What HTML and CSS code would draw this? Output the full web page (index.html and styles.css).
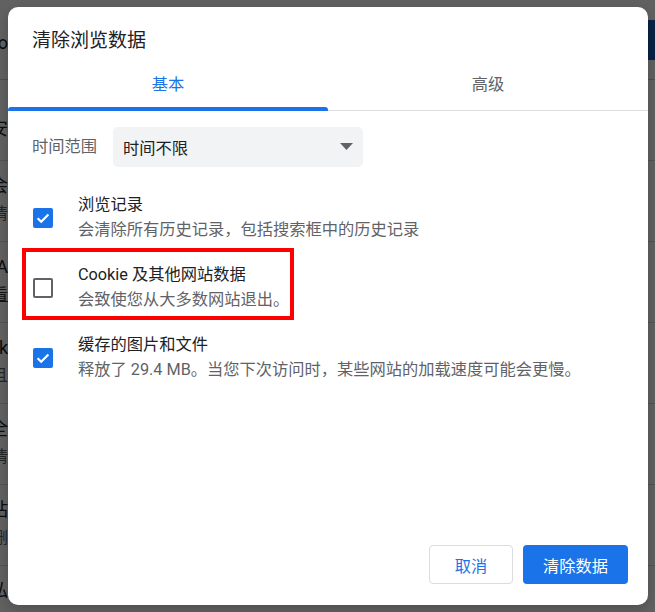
FILE: index.html
```html
<!DOCTYPE html>
<html lang="zh-CN">
<head>
<meta charset="utf-8">
<title>清除浏览数据</title>
<link rel="stylesheet" href="styles.css">
</head>
<body>
<div class="page">
  <div class="prow prow-top">
    <div class="pleft"><span class="frag">Info</span></div>
    <div class="pright"><span class="pbtn">保存站</span></div>
  </div>
  <div class="prow prow-one">
    <div class="pleft"><span class="frag">安</span></div>
  </div>
  <div class="prow">
    <div class="pleft"><span class="frag">会</span><span class="frag small">会清</span></div>
  </div>
  <div class="prow">
    <div class="pleft"><span class="frag">A</span><span class="frag small link">查看</span></div>
  </div>
  <div class="prow">
    <div class="pleft"><span class="frag">ok</span><span class="frag small">且</span></div>
  </div>
  <div class="prow">
    <div class="pleft"><span class="frag">全</span><span class="frag small">全清</span></div>
  </div>
  <div class="prow">
    <div class="pleft"><span class="frag">站</span><span class="frag small">到删</span></div>
  </div>
  <div class="prow prow-last">
    <div class="pleft"><span class="frag">私</span></div>
  </div>
</div>
<div class="scrim"></div>

<div class="dialog" role="dialog">
  <h1 class="title">清除浏览数据</h1>
  <div class="tabs">
    <div class="tab active">基本</div>
    <div class="tab">高级</div>
  </div>
  <div class="body">
    <div class="range">
      <span class="range-label">时间范围</span>
      <div class="select">
        <span>时间不限</span>
        <svg class="arrow" width="13" height="7" viewBox="0 0 13 7"><path d="M0 0h13L6.5 7z" fill="#5f6368"/></svg>
      </div>
    </div>
    <div class="items">
      <div class="item">
        <span class="cb checked">
          <svg width="20" height="20" viewBox="0 0 20 20"><path d="M4.6 10.2l3.6 3.6 7.2-7.3" fill="none" stroke="#fff" stroke-width="2.2"/></svg>
        </span>
        <div class="texts">
          <div class="item-title">浏览记录</div>
          <div class="item-desc">会清除所有历史记录，包括搜索框中的历史记录</div>
        </div>
      </div>
      <div class="item">
        <span class="cb"></span>
        <div class="texts">
          <div class="item-title">Cookie 及其他网站数据</div>
          <div class="item-desc">会致使您从大多数网站退出。</div>
        </div>
      </div>
      <div class="item">
        <span class="cb checked">
          <svg width="20" height="20" viewBox="0 0 20 20"><path d="M4.6 10.2l3.6 3.6 7.2-7.3" fill="none" stroke="#fff" stroke-width="2.2"/></svg>
        </span>
        <div class="texts">
          <div class="item-title">缓存的图片和文件</div>
          <div class="item-desc">释放了 29.4 MB。当您下次访问时，某些网站的加载速度可能会更慢。</div>
        </div>
      </div>
    </div>
  </div>
  <div class="footer">
    <button class="btn btn-cancel">取消</button>
    <button class="btn btn-primary">清除数据</button>
  </div>
  <div class="highlight"></div>
</div>
</body>
</html>
```

FILE: styles.css
```css
* { box-sizing: border-box; }

html, body {
  margin: 0;
  padding: 0;
  width: 655px;
  height: 612px;
  overflow: hidden;
  font-family: Roboto, "Noto Sans CJK SC", sans-serif;
}

/* underlying page */
.page {
  position: relative;
  width: 655px;
  height: 612px;
  background: #ffffff;
  display: flex;
  flex-direction: column;
  overflow: hidden;
}
.prow {
  height: 81px;
  flex: none;
  border-bottom: 1px solid #d9d9d9;
  display: flex;
  justify-content: space-between;
  align-items: flex-start;
}
.prow-top { height: 80px; border-bottom-color: #cfcfcf; }
.prow-last { flex: 1; height: auto; min-height: 0; border-bottom: none; }
.pleft {
  display: flex;
  flex-direction: column;
  padding-top: 14px;
  gap: 6px;
}
.frag {
  display: block;
  font-size: 18px;
  line-height: 22px;
  color: #202124;
  white-space: nowrap;
  direction: rtl;
  width: 12px;
  overflow: hidden;
  text-align: right;
  margin-left: -4px;
}
.frag.small { font-size: 16px; color: #5f6368; }
.frag.link { color: #333; text-decoration: underline; }
.prow-top .pleft { padding-top: 32px; }
.prow-one .pleft { padding-top: 38px; }
.pright { padding-top: 20px; }
.pbtn {
  display: block;
  height: 40px;
  width: 30px;
  background: #1a5bb8;
  color: #fff;
  font-size: 18px;
  line-height: 40px;
  white-space: nowrap;
  overflow: hidden;
  text-indent: -36px;
}

.scrim {
  position: absolute;
  inset: 0;
  background: rgba(0, 0, 0, 0.62);
}

/* dialog */
.dialog {
  position: absolute;
  left: 8px;
  top: 7px;
  width: 640px;
  height: 598px;
  background: #ffffff;
  border-radius: 10px;
  display: flex;
  flex-direction: column;
  box-shadow: 0 4px 12px rgba(0, 0, 0, 0.2);
}

.title {
  margin: 0;
  padding: 22px 24px 0 24px;
  font-size: 19px;
  font-weight: 400;
  line-height: 24px;
  color: #202124;
}

.tabs {
  display: flex;
  margin-top: 11px;
  border-bottom: 1px solid #dadce0;
}
.tab {
  flex: 1;
  text-align: center;
  font-size: 16.25px;
  line-height: 24px;
  height: 46px;
  padding-top: 9px;
  color: #5f6368;
  position: relative;
}
.tab.active { color: #1a73e8; }
.tab.active::after {
  content: "";
  position: absolute;
  left: 0;
  right: 0;
  bottom: -1px;
  height: 4px;
  background: #1a73e8;
  border-radius: 3px 3px 0 0;
}

.body {
  flex: 1;
  padding: 16px 24px 0 24px;
}

.range {
  display: flex;
  align-items: center;
  gap: 16px;
}
.range-label {
  font-size: 16.25px;
  line-height: 24px;
  color: #5f6368;
  width: 65px;
}
.select {
  width: 250px;
  height: 40px;
  background: #f1f3f4;
  border-radius: 5px;
  display: flex;
  align-items: center;
  justify-content: space-between;
  padding: 0 10px 0 10px;
  font-size: 16.25px;
  color: #202124;
}
.arrow { display: block; margin-top: -1px; }

.items {
  display: flex;
  flex-direction: column;
  gap: 21px;
  margin-top: 26px;
}
.item {
  display: flex;
  align-items: center;
  gap: 25px;
}
.cb {
  flex: none;
  width: 20px;
  height: 20px;
  margin-left: 1px;
  border: 2px solid #5f6368;
  border-radius: 2px;
  display: flex;
  align-items: center;
  justify-content: center;
}
.cb.checked {
  background: #1a73e8;
  border: none;
}
.cb svg { display: block; }
.texts { display: flex; flex-direction: column; }
.item-title {
  font-size: 16.25px;
  line-height: 24px;
  color: #202124;
}
.item-desc {
  font-size: 16.25px;
  line-height: 25px;
  color: #5f6368;
}

.footer {
  display: flex;
  justify-content: flex-end;
  gap: 10px;
  padding: 0 20px 21px 0;
}
.btn {
  height: 39px;
  border-radius: 4px;
  font-family: Roboto, "Noto Sans CJK SC", sans-serif;
  font-size: 16.25px;
  padding: 0 16px;
  cursor: pointer;
}
.btn-cancel {
  width: 84px;
  background: #ffffff;
  color: #1a73e8;
  border: 1px solid #dadce0;
}
.btn-primary {
  width: 105px;
  background: #1a73e8;
  color: #ffffff;
  border: none;
}

/* red annotation box */
.highlight {
  position: absolute;
  left: 14px;
  top: 241px;
  width: 272px;
  height: 72px;
  border: 4px solid #ff0000;
}
```
